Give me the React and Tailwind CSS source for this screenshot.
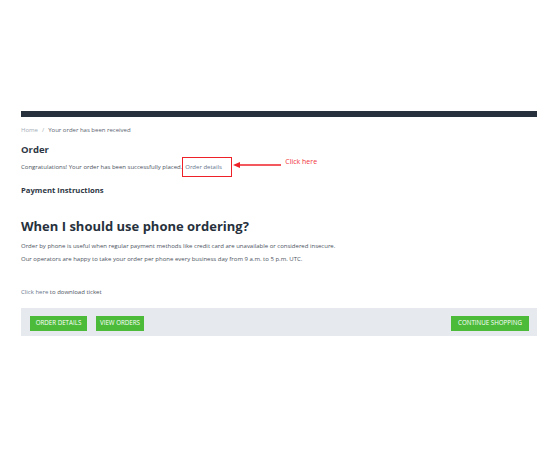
import React from 'react'

function App() {
  return (
    <div className="w-[550px] h-[450px] bg-white" style={{ fontFamily: '"Open Sans", sans-serif' }}>
      <div className="pt-[111px] ml-[21px] w-[516px]">
        <div className="h-[6px] bg-[#27313d]"></div>

        <div className="mt-[8px] text-[6px] leading-[10px] text-[#5b6370]">
          <span className="text-[#a3acb6]">Home</span>
          <span className="mx-[4px] text-[#a3acb6]">/</span>
          <span>Your order has been received</span>
        </div>

        <h1 className="mt-[9px] text-[9.5px] leading-[12px] font-bold text-[#2e3744]">Order</h1>

        <div className="mt-[6px] flex text-[6px] leading-[10px] text-[#4b5360]">
          <span>Congratulations! Your order has been successfully placed.</span>
          <span className="relative ml-[3px] text-[#66758c]">
            Order details
            <span className="absolute left-[-3px] top-[-5px] w-[50px] h-[20px] border-[1.5px] border-[#ee2129]"></span>
            <svg className="absolute left-[48px] top-[-1px]" width="50" height="8" viewBox="0 0 50 8">
              <line x1="6" y1="4" x2="48" y2="4" stroke="#ee2129" strokeWidth="1.5" />
              <polygon points="0,4 7,1 7,7" fill="#ee2129" />
            </svg>
            <span className="absolute left-[100px] top-[-5px] whitespace-nowrap text-[7px] text-[#f0343a]">Click here</span>
          </span>
        </div>

        <h2 className="mt-[13px] text-[7.7px] leading-[10px] font-bold text-[#2e3744]">Payment instructions</h2>

        <h2 className="mt-[22px] text-[13px] leading-[18px] font-bold text-[#27313d]">When I should use phone ordering?</h2>

        <p className="mt-[7px] text-[6px] leading-[9px] text-[#4b5360]">
          Order by phone is useful when regular payment methods like credit card are unavailable or considered insecure.
        </p>
        <p className="mt-[4px] text-[6px] leading-[9px] text-[#4b5360]">
          Our operators are happy to take your order per phone every business day from 9 a.m. to 5 p.m. UTC.
        </p>

        <p className="mt-[24px] text-[6px] leading-[9px] text-[#4b5360]">
          <span className="text-[#66758c]">Click here</span> to download ticket
        </p>

        <div className="mt-[11px] h-[28px] bg-[#e6eaee] flex items-start justify-between pt-[8px] pl-[9px] pr-[8px]">
          <div className="flex gap-[9px]">
            <button className="h-[15px] w-[57px] bg-[#4cbb3a] text-white text-[6.2px] leading-none">ORDER DETAILS</button>
            <button className="h-[15px] w-[48px] bg-[#4cbb3a] text-white text-[6.2px] leading-none">VIEW ORDERS</button>
          </div>
          <button className="h-[15px] w-[78px] bg-[#4cbb3a] text-white text-[6.2px] leading-none">CONTINUE SHOPPING</button>
        </div>
      </div>
    </div>
  )
}

export default App
